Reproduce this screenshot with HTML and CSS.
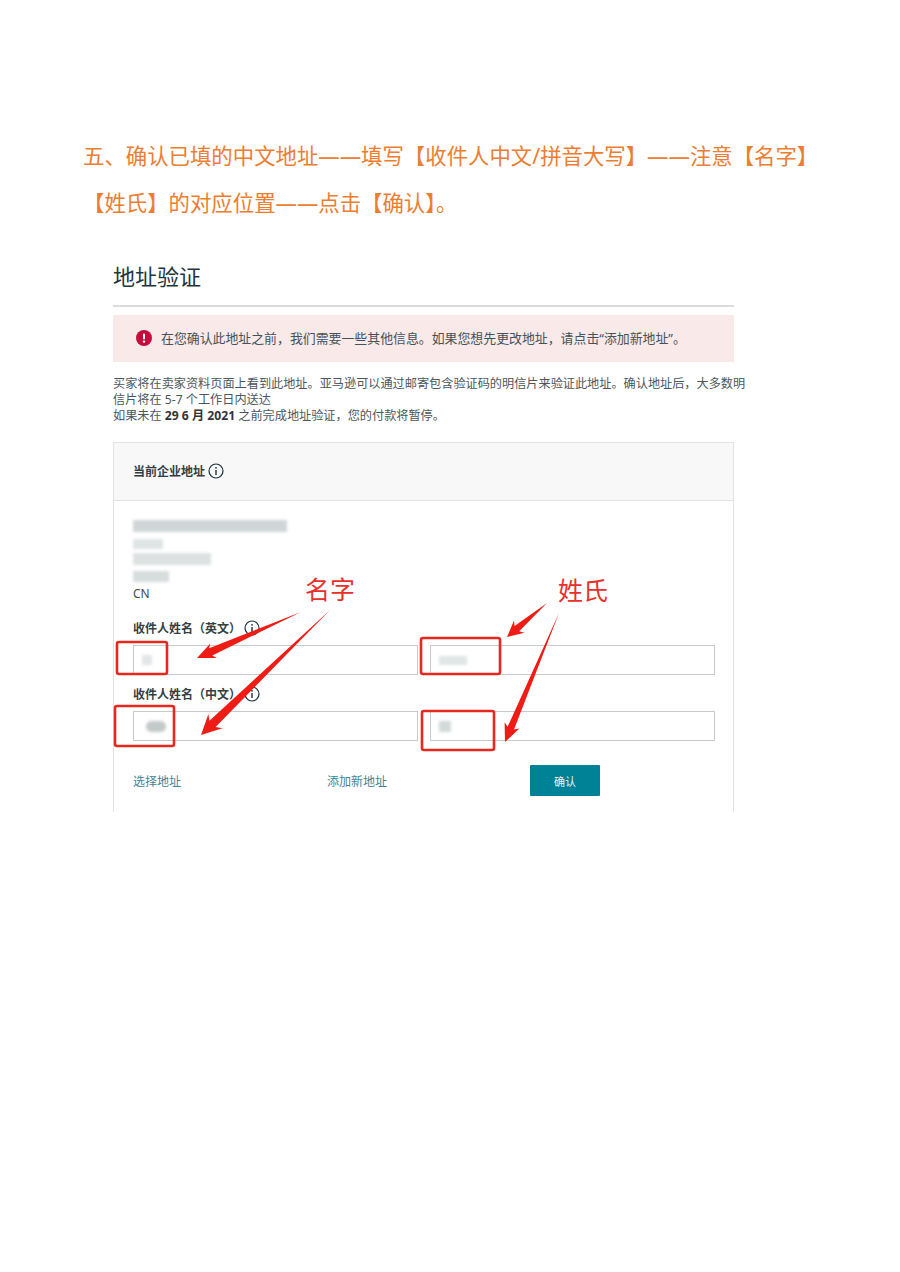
FILE: index.html
```html
<!DOCTYPE html>
<html lang="zh-CN">
<head>
    <meta charset="UTF-8">
    <meta name="viewport" content="width=device-width, initial-scale=1.0">
    <title>地址验证</title>
    <link rel="stylesheet" href="styles.css">
</head>
<body>
    <div class="page">
        <h2 class="step-title">五、确认已填的中文地址——填写【收件人中文/拼音大写】——注意【名字】<br>【姓氏】的对应位置——点击【确认】。</h2>

        <div class="shot">
            <h1 class="shot-title">地址验证</h1>

            <div class="alert">
                <svg class="alert-icon" viewBox="0 0 16 16">
                    <circle cx="8" cy="8" r="8" fill="#c40d3c"/>
                    <rect x="7" y="3.4" width="2" height="6" rx="1" fill="#fff"/>
                    <circle cx="8" cy="11.6" r="1.2" fill="#fff"/>
                </svg>
                <span>在您确认此地址之前，我们需要一些其他信息。如果您想先更改地址，请点击“添加新地址”。</span>
            </div>

            <p class="intro">买家将在卖家资料页面上看到此地址。亚马逊可以通过邮寄包含验证码的明信片来验证此地址。确认地址后，大多数明<br>信片将在 5-7 个工作日内送达<br>如果未在 <b>29 6 月 2021</b> 之前完成地址验证，您的付款将暂停。</p>

            <div class="card">
                <div class="card-header">
                    <span>当前企业地址</span>
                    <svg class="info-icon" viewBox="0 0 16 16">
                        <circle cx="8" cy="8" r="7" fill="none" stroke="#16313a" stroke-width="1.2"/>
                        <rect x="7.3" y="7" width="1.4" height="5" fill="#16313a"/>
                        <circle cx="8" cy="4.8" r="0.9" fill="#16313a"/>
                    </svg>
                </div>

                <div class="card-body">
                    <div class="address">
                        <div class="smudge smudge-line1"></div>
                        <div class="smudge smudge-line2"></div>
                        <div class="smudge smudge-line3"></div>
                        <div class="smudge smudge-line4"></div>
                        <div class="country">CN</div>
                    </div>

                    <div class="field-label">
                        <span>收件人姓名（英文）</span>
                        <svg class="info-icon" viewBox="0 0 16 16">
                            <circle cx="8" cy="8" r="7" fill="none" stroke="#16313a" stroke-width="1.2"/>
                            <rect x="7.3" y="7" width="1.4" height="5" fill="#16313a"/>
                            <circle cx="8" cy="4.8" r="0.9" fill="#16313a"/>
                        </svg>
                    </div>
                    <div class="field-row">
                        <div class="input"><div class="smudge smudge-en-first"></div></div>
                        <div class="input"><div class="smudge smudge-en-last"></div></div>
                    </div>

                    <div class="field-label">
                        <span>收件人姓名（中文）</span>
                        <svg class="info-icon" viewBox="0 0 16 16">
                            <circle cx="8" cy="8" r="7" fill="none" stroke="#16313a" stroke-width="1.2"/>
                            <rect x="7.3" y="7" width="1.4" height="5" fill="#16313a"/>
                            <circle cx="8" cy="4.8" r="0.9" fill="#16313a"/>
                        </svg>
                    </div>
                    <div class="field-row">
                        <div class="input"><div class="smudge smudge-cn-first"></div></div>
                        <div class="input"><div class="smudge smudge-cn-last"></div></div>
                    </div>

                    <div class="actions">
                        <a class="link link-select">选择地址</a>
                        <a class="link link-add">添加新地址</a>
                        <button class="confirm-btn">确认</button>
                    </div>
                </div>
            </div>
        </div>

        <!-- 红色标注 -->
        <svg class="marks" viewBox="0 0 900 1272">
            <g fill="none" stroke="#e8281e" stroke-width="2.6">
                <rect x="117" y="642" width="50" height="32" rx="2"/>
                <rect x="115" y="706" width="59" height="40" rx="2"/>
                <rect x="421" y="638" width="79" height="36" rx="2"/>
                <rect x="422" y="711" width="72" height="39" rx="2"/>
            </g>
            <g fill="#ee1c14">
                <polygon points="301,612 212.3,655.6 216.7,658 197,658 210.3,643.4 209.1,648.2"/>
                <polygon points="330,610 215.6,727.1 222.4,728.3 201,735 208.4,713.9 209.4,720.7"/>
                <polygon points="547,603 519.2,631.3 524.4,632.7 507,637 514,620.5 514.6,625.9"/>
                <polygon points="559,613 514,729.6 519.4,728.5 505,742 504.6,722.3 507.6,726.8"/>
            </g>
        </svg>
        <div class="mark-text mark-first">名字</div>
        <div class="mark-text mark-last">姓氏</div>
    </div>
</body>
</html>
```

FILE: styles.css
```css
* {
    margin: 0;
    padding: 0;
    box-sizing: border-box;
}

body {
    font-family: "Noto Sans", "Noto Sans CJK SC", sans-serif;
    background: #fff;
    color: #3b4a50;
}

.page {
    position: relative;
    width: 900px;
    height: 1272px;
    overflow: hidden;
}

.step-title {
    padding: 132px 0 0 83px;
    font-size: 21.4px;
    font-weight: 400;
    line-height: 47px;
    color: #ed7d31;
    white-space: nowrap;
}

.shot {
    width: 621px;
    margin: 33px 0 0 113px;
}

.shot-title {
    height: 48px;
    font-size: 22px;
    font-weight: 400;
    line-height: 34px;
    color: #1c3640;
    border-bottom: 2px solid #dcdcdc;
}

.alert {
    display: flex;
    align-items: center;
    gap: 9px;
    height: 47px;
    margin-top: 8px;
    padding-left: 23px;
    padding-bottom: 2px;
    font-size: 12.9px;
    color: #44525a;
    background: #f9e9e9;
}

.alert-icon {
    width: 16px;
    height: 16px;
}

.intro {
    width: 640px;
    margin-top: 14px;
    font-size: 12.17px;
    line-height: 16px;
    color: #4a575c;
    white-space: nowrap;
}

.intro b {
    color: #333;
}

.card {
    height: 370px;
    margin-top: 18px;
    border: 1px solid #e3e3e3;
    border-bottom: none;
}

.card-header {
    display: flex;
    align-items: center;
    gap: 3px;
    height: 58px;
    padding-left: 19px;
    padding-bottom: 2px;
    font-size: 12px;
    font-weight: 700;
    color: #333f44;
    background: #f8f8f8;
    border-bottom: 1px solid #e3e3e3;
}

.info-icon {
    width: 16px;
    height: 16px;
}

.card-body {
    padding: 19px 18px 0 19px;
}

.address {
    height: 97px;
}

.smudge {
    background: #cfd6d7;
    filter: blur(1.5px);
}

.smudge-line1 {
    width: 154px;
    height: 12px;
}

.smudge-line2 {
    width: 30px;
    height: 10px;
    margin-top: 7px;
    background: #e0e4e4;
}

.smudge-line3 {
    width: 78px;
    height: 12px;
    margin-top: 4px;
    background: #dde1e2;
}

.smudge-line4 {
    width: 36px;
    height: 11px;
    margin-top: 6px;
    background: #d7dcdc;
}

.country {
    margin-top: 4px;
    font-size: 12px;
    line-height: 16px;
    color: #3f4c52;
}

.field-label {
    display: flex;
    align-items: center;
    gap: 3px;
    height: 22px;
    font-size: 12px;
    font-weight: 700;
    color: #333f44;
}

.field-row {
    display: flex;
    gap: 12px;
    margin: 6px 0 8px;
}

.input {
    display: flex;
    align-items: center;
    width: 285px;
    height: 30px;
    padding-left: 8px;
    border: 1px solid #c6cbcc;
    background: #fff;
}

.smudge-en-first {
    width: 10px;
    height: 10px;
    background: #e3e6e6;
}

.smudge-en-last {
    width: 28px;
    height: 9px;
    background: #e0e5e5;
}

.smudge-cn-first {
    width: 20px;
    height: 11px;
    margin-left: 4px;
    border-radius: 6px;
    background: #c3c9c9;
}

.smudge-cn-last {
    width: 12px;
    height: 11px;
    background: #d3d9d8;
}

.actions {
    display: flex;
    align-items: center;
    height: 31px;
    margin-top: 24px;
    font-size: 12px;
}

.link {
    color: #3f8497;
}

.link-select {
    width: 194px;
}

.link-add {
    width: 203px;
}

.confirm-btn {
    width: 70px;
    height: 31px;
    font-family: inherit;
    font-size: 11px;
    color: #e8f3f4;
    background: #008296;
    border: none;
    border-radius: 1px;
}

.marks {
    position: absolute;
    left: 0;
    top: 0;
    width: 900px;
    height: 1272px;
    pointer-events: none;
}

.mark-text {
    position: absolute;
    font-size: 25px;
    line-height: 32px;
    color: #e8302a;
}

.mark-first {
    left: 305px;
    top: 573px;
}

.mark-last {
    left: 558px;
    top: 574px;
}
```
